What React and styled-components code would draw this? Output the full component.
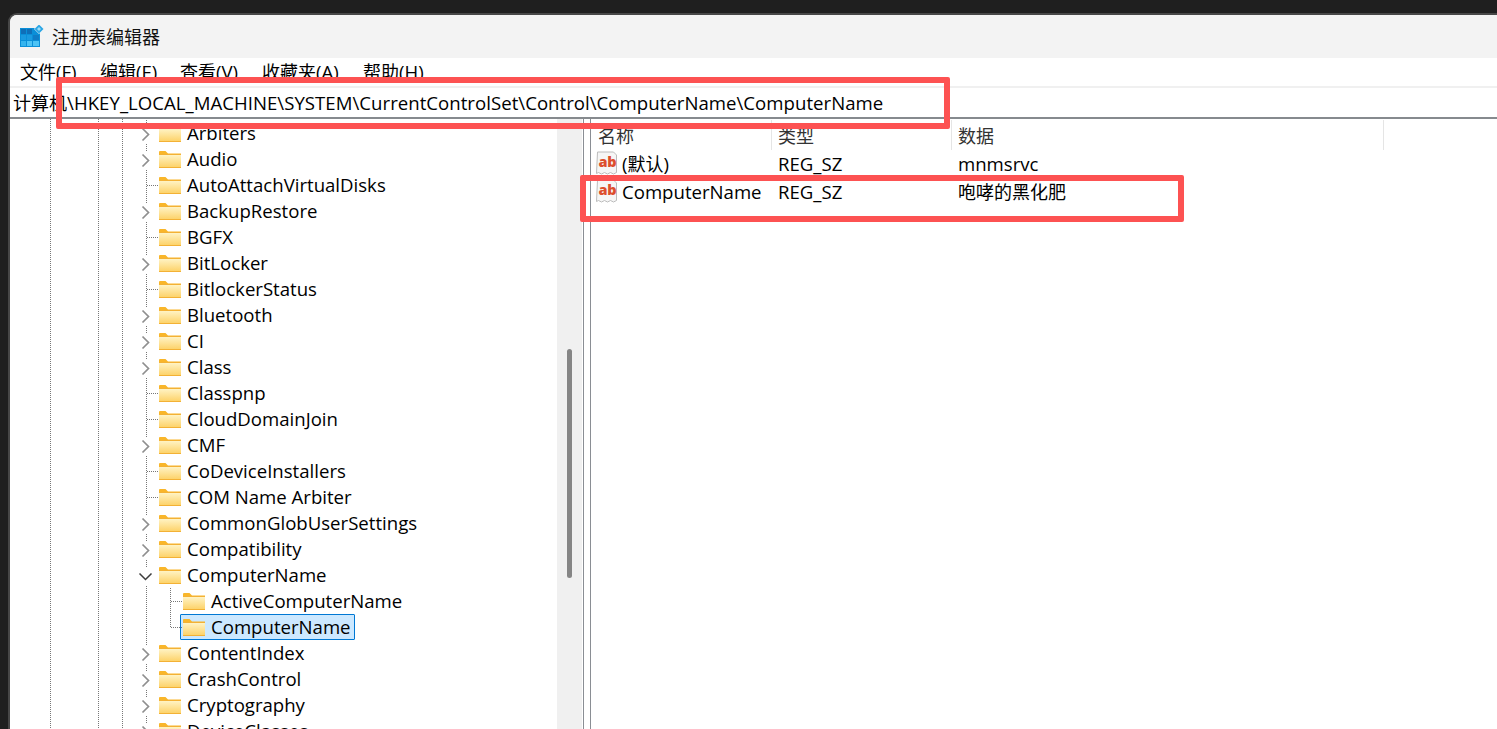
import React from "react";
import styled, { createGlobalStyle } from "styled-components";

const FONT = `"Open Sans", "Noto Sans CJK SC", sans-serif`;

const Global = createGlobalStyle`
  html, body { margin: 0; padding: 0; height: 100%; background: #1f1f1f; overflow: hidden; }
  body { font-family: ${FONT}; color: #000; }
`;

const Page = styled.div`
  height: 100vh;
  box-sizing: border-box;
  padding: 13px 0 0 8px;
  background: #1f1f1f;
  overflow: hidden;
`;
const Win = styled.div`
  position: relative;
  height: 716px;
  box-sizing: border-box;
  display: flex;
  flex-direction: column;
  background: #fff;
  border-top: 2px solid #474747;
  border-left: 2px solid #474747;
  border-top-left-radius: 9px;
  overflow: hidden;
`;
const TitleBar = styled.div`
  flex: 0 0 43px;
  display: flex;
  align-items: center;
  gap: 10px;
  padding: 0 0 0 10px;
  background: #f3f3f3;
`;
const TitleText = styled.span`
  font-size: 18px;
  color: #111;
  line-height: 1;
`;
const MenuBar = styled.div`
  flex: 0 0 28px;
  min-height: 0;
  overflow: hidden;
  display: flex;
  align-items: flex-start;
  background: #fff;
  padding-left: 10px;
`;
const MenuItem = styled.span`
  width: ${(p) => p.$w}px;
  font-size: 18.6px;
  line-height: 28px;
  white-space: nowrap;
`;
const Cjk = styled.span`
  font-size: 18px;
`;
const AddressBar = styled.div`
  flex: 0 0 33px;
  min-height: 0;
  overflow: hidden;
  box-sizing: border-box;
  border-top: 2px solid #f0f0f0;
  border-bottom: 2px solid #868a8e;
  padding-left: 3px;
  font-size: 18.6px;
  letter-spacing: 0.03px;
  line-height: 30px;
  white-space: nowrap;
  background: #fff;
`;
const Panes = styled.div`
  flex: 1;
  min-height: 0;
  display: flex;
`;
const Tree = styled.div`
  flex: 0 0 547px;
  padding-top: 1px;
  overflow: hidden;
  background-image:
    repeating-linear-gradient(to bottom, #777 0 1px, transparent 1px 2px),
    repeating-linear-gradient(to bottom, #777 0 1px, transparent 1px 2px),
    repeating-linear-gradient(to bottom, #777 0 1px, transparent 1px 2px);
  background-size: 1px 100%;
  background-repeat: no-repeat;
  background-position: 40px 0, 88px 0, 112px 0;
`;
const Row = styled.div`
  height: 26px;
  display: flex;
  align-items: center;
  padding-left: 124px;
`;
const Branch = styled.div`
  flex: 0 0 24px;
  height: 26px;
  position: relative;
  &::before {
    content: "";
    position: absolute;
    left: 12px;
    top: 0;
    width: 1px;
    height: ${(p) => (p.$last ? "13px" : "26px")};
    background-image: repeating-linear-gradient(to bottom, #777 0 1px, transparent 1px 2px);
  }
  &::after {
    content: "";
    position: absolute;
    display: ${(p) => (p.$tee ? "block" : "none")};
    left: 13px;
    top: 13px;
    width: 11px;
    height: 1px;
    background-image: repeating-linear-gradient(to right, #777 0 1px, transparent 1px 2px);
  }
`;
const Toggle = styled.svg`
  position: absolute;
  left: 3px;
  top: 6px;
  width: 17px;
  height: 17px;
  z-index: 1;
  background: #fff;
`;
const Node = styled.div`
  display: flex;
  align-items: center;
  gap: 6px;
  height: 26px;
  box-sizing: border-box;
  padding: 0 3px 0 ${(p) => (p.$selected ? "2px" : "1px")};
  margin-left: ${(p) => (p.$selected ? "-2px" : "0")};
  background: ${(p) => (p.$selected ? "#cce8ff" : "transparent")};
  border: ${(p) => (p.$selected ? "1px solid #0078d4" : "none")};
  border-radius: 1px;
`;
const NodeLabel = styled.span`
  font-size: 18.6px;
  line-height: 26px;
  white-space: nowrap;
`;
const ScrollTrack = styled.div`
  flex: 0 0 26px;
  position: relative;
  background: #f0f0f0;
  border-right: 1px solid #fff;
  box-sizing: border-box;
`;
const ScrollThumb = styled.div`
  position: absolute;
  left: 10px;
  top: 230px;
  width: 5px;
  height: 229px;
  border-radius: 3px;
  background: #858585;
`;
const Splitter = styled.div`
  flex: 0 0 8px;
  box-sizing: border-box;
  background: #fff;
  border-left: 1px solid #8a8e94;
  border-right: 1px solid #8a8e94;
`;
const List = styled.div`
  flex: 1;
  min-width: 0;
`;
const Columns = "181px 180px 432px 1fr";
const ListHead = styled.div`
  display: grid;
  grid-template-columns: ${Columns};
  grid-template-rows: 30px;
  margin: 1px 0 -1px;
  height: 30px;
`;
const HeadCell = styled.div`
  padding-left: ${(p) => (p.$first ? 7 : 6)}px;
  font-size: 18px;
  line-height: 32px;
  color: #333;
  box-sizing: border-box;
  border-right: ${(p) => (p.$plain ? "none" : "1px solid #e5e5e5")};
`;
const ListRow = styled.div`
  display: grid;
  grid-template-columns: ${Columns};
  height: 28px;
  align-items: center;
`;
const NameCell = styled.div`
  display: flex;
  align-items: center;
  gap: 4px;
  padding-left: 5px;
  font-size: 18.6px;
  white-space: nowrap;
`;
const Cell = styled.div`
  padding-left: 6px;
  font-size: ${(p) => (p.$cjk ? 18 : 18.6)}px;
  white-space: nowrap;
`;
const Callout = styled.div`
  position: absolute;
  z-index: 2;
  left: ${(p) => p.$x}px;
  top: ${(p) => p.$y}px;
  width: ${(p) => p.$w}px;
  height: ${(p) => p.$h}px;
  box-sizing: border-box;
  border: 6px solid #fd5252;
  border-radius: 2px;
  pointer-events: none;
`;

const AppIcon = () => (
  <svg width="24" height="23" viewBox="0 0 24 23" style={{ marginRight: -2 }}>
    <rect x="0" y="3" width="20" height="19" fill="#0a8fd8" />
    <rect x="1" y="4" width="5" height="5" fill="#0f6fb8" />
    <rect x="7" y="4" width="5" height="5" fill="#0f6fb8" />
    <rect x="1" y="10" width="5" height="5" fill="#1a9ae0" />
    <rect x="7" y="10" width="5" height="5" fill="#1a9ae0" />
    <rect x="13" y="10" width="6" height="5" fill="#0f7cc6" />
    <rect x="1" y="16" width="5" height="5" fill="#35b4ee" />
    <rect x="7" y="16" width="5" height="5" fill="#4cc3f5" />
    <rect x="13" y="16" width="6" height="5" fill="#4cc3f5" />
    <path d="M19 -1l5 5-5 5-5-5z" fill="#f3f3f3" />
    <path d="M19 -.5l4.500 4.500-4.500 4.500-4.500-4.500z" fill="#2aa5e4" />
    <path d="M19 2l2 2-2 2-2-2z" fill="#9adcf8" />
  </svg>
);

const FolderIcon = () => (
  <svg width="22" height="17" viewBox="0 0 22 17" style={{ flex: "none" }}>
    <defs>
      <linearGradient id="fg" x1="0" y1="0" x2="0" y2="1">
        <stop offset="0" stopColor="#fff3c4" />
        <stop offset="1" stopColor="#fdd36b" />
      </linearGradient>
    </defs>
    <path d="M0 1Q0 0 1 0h5.500L9 2.500h13V5H0z" fill="#f9b62a" />
    <rect x="0" y="3" width="22" height="14" fill="#f3b135" />
    <rect x="0" y="4" width="22" height="12" fill="url(#fg)" />
  </svg>
);

const RegIcon = () => (
  <svg width="22" height="24" viewBox="0 0 22 24" style={{ flex: "none" }}>
    <path d="M1.500 1h16l3 3v17.500l-3 1.500-3-1.500-3 1.500-3-1.500-3 1.500-3-1.500-2 1z" fill="#f6f6f6" stroke="#bcbcbc" strokeWidth="1" />
    <text x="2.500" y="16" fontFamily="'Open Sans', sans-serif" fontWeight="800" fontSize="14.500" letterSpacing="-0.3" fill="#dd4f2e">ab</text>
  </svg>
);

const Chevron = ({ open }) => (
  <Toggle viewBox="0 0 17 17">
    {open ? (
      <path d="M2.500 5.500l6 6 6-6" fill="none" stroke="#3c3c3c" strokeWidth="1.500" />
    ) : (
      <path d="M5.500 2.500l6 6-6 6" fill="none" stroke="#8f8f8f" strokeWidth="1.700" />
    )}
  </Toggle>
);

const nodes = [
  ["Arbiters", "c"],
  ["Audio", "c"],
  ["AutoAttachVirtualDisks"],
  ["BackupRestore", "c"],
  ["BGFX"],
  ["BitLocker", "c"],
  ["BitlockerStatus"],
  ["Bluetooth", "c"],
  ["CI", "c"],
  ["Class", "c"],
  ["Classpnp"],
  ["CloudDomainJoin"],
  ["CMF", "c"],
  ["CoDeviceInstallers"],
  ["COM Name Arbiter"],
  ["CommonGlobUserSettings", "c"],
  ["Compatibility", "c"],
  ["ComputerName", "o"],
  ["ActiveComputerName", "child"],
  ["ComputerName", "last"],
  ["ContentIndex", "c"],
  ["CrashControl", "c"],
  ["Cryptography", "c"],
  ["DeviceClasses", "c"],
];

const menus = [
  ["文件", "(F)", 80],
  ["编辑", "(E)", 80],
  ["查看", "(V)", 82],
  ["收藏夹", "(A)", 101],
  ["帮助", "(H)", 80],
];

export default function App() {
  return (
    <Page>
      <Global />
      <Win>
        <TitleBar>
          <AppIcon />
          <TitleText>注册表编辑器</TitleText>
        </TitleBar>
        <MenuBar>
          {menus.map(([t, k, w]) => (
            <MenuItem key={t} $w={w}><Cjk>{t}</Cjk>{k}</MenuItem>
          ))}
        </MenuBar>
        <AddressBar><Cjk>计算机</Cjk>\HKEY_LOCAL_MACHINE\SYSTEM\CurrentControlSet\Control\ComputerName\ComputerName</AddressBar>
        <Panes>
          <Tree>
            {nodes.map(([label, kind], i) => {
              const isChild = kind === "child" || kind === "last";
              return (
                <Row key={i}>
                  {isChild && <Branch />}
                  {kind === "c" || kind === "o" ? (
                    <Branch>
                      <Chevron open={kind === "o"} />
                    </Branch>
                  ) : (
                    <Branch $tee $last={kind === "last"} />
                  )}
                  <Node $selected={kind === "last"}>
                    <FolderIcon />
                    <NodeLabel>{label}</NodeLabel>
                  </Node>
                </Row>
              );
            })}
          </Tree>
          <ScrollTrack>
            <ScrollThumb />
          </ScrollTrack>
          <Splitter />
          <List>
            <ListHead>
              <HeadCell $first>名称</HeadCell>
              <HeadCell>类型</HeadCell>
              <HeadCell>数据</HeadCell>
              <HeadCell $plain />
            </ListHead>
            <ListRow>
              <NameCell><RegIcon /><span>(<Cjk>默认</Cjk>)</span></NameCell>
              <Cell>REG_SZ</Cell>
              <Cell>mnmsrvc</Cell>
            </ListRow>
            <ListRow>
              <NameCell><RegIcon /><span>ComputerName</span></NameCell>
              <Cell>REG_SZ</Cell>
              <Cell $cjk>咆哮的黑化肥</Cell>
            </ListRow>
          </List>
        </Panes>
        <Callout $x={46} $y={62} $w={894} $h={52} />
        <Callout $x={570} $y={160} $w={604} $h={47} />
      </Win>
    </Page>
  );
}
